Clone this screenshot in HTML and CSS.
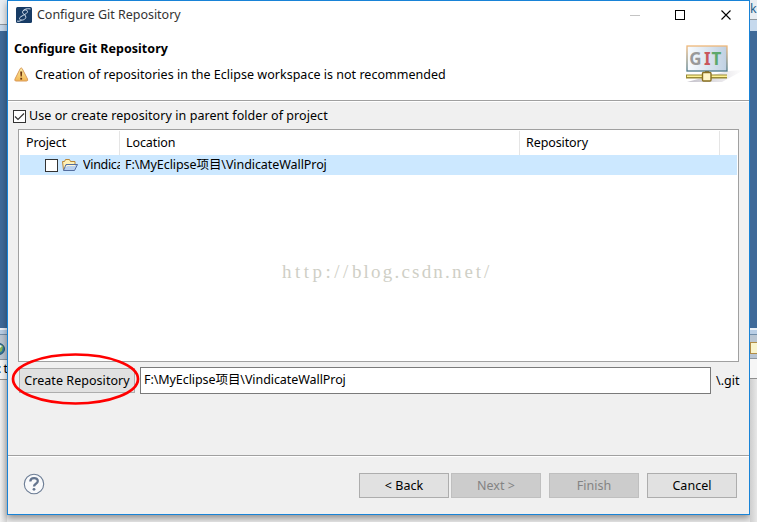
FILE: index.html
```html
<!DOCTYPE html>
<html lang="en">
<head>
<meta charset="utf-8">
<title>Configure Git Repository</title>
<link rel="stylesheet" href="styles.css">
</head>
<body>
<div class="desktop">
  <div class="strip strip-left">
    <div class="strip-top"></div><div class="strip-bar"></div><div class="strip-blue"></div>
    <div class="strip-edge"></div><div class="strip-tools"><svg class="globe" width="7" height="14" viewBox="0 0 7 14"><circle cx="-1" cy="7" r="5.5" fill="#347ca0" stroke="#285274"/><path d="M0 3l3 1-1 5-3 2z" fill="#8bb657"/><path d="M0 3l2 1-2 2z" fill="#e8f3f8"/></svg></div>
    <div class="strip-text"><span>: t</span></div><div class="strip-rest"></div>
  </div>
  <main class="dialog">
    <div class="titlebar">
      <svg class="app-icon" width="16" height="16" viewBox="0 0 16 16"><rect width="16" height="16" rx="1.5" fill="#173b65"/><path d="M14.5 2C10 1 6.5 3 6.5 5.2S10.500 8 9.800 10.500C9 13.500 3.500 14 3.500 11.500S11.500 7.500 11.500 4.500C11.500 2.500 8 2.500 7 4M1 14c1 .5 3 .3 4.500-.8" fill="none" stroke="#d3dfed" stroke-width="1"/></svg>
      <span class="title">Configure Git Repository</span>
      <svg class="controls" width="102" height="12" viewBox="0 0 102 12"><path d="M0 6.500h10" stroke="#c4c4c4"/><rect x="45.500" y="1.500" width="9" height="9" fill="none" stroke="#000"/><path d="M91.500 1.500l9 9m0-9l-9 9" stroke="#000" stroke-width="1.100"/></svg>
    </div>
    <header class="banner">
      <div class="banner-copy">
        <h1>Configure Git Repository</h1>
        <div class="warning"><svg width="16" height="16" viewBox="0 0 16 16"><defs><linearGradient id="amber" x2="0" y2="1"><stop stop-color="#fff0a5"/><stop offset="1" stop-color="#f2b552"/></linearGradient></defs><path d="M6.300 1.500Q7.200.3 8.100 1.500L13.500 12q.8 2-1 2H2Q.2 14 1 12z" fill="url(#amber)" stroke="#d99a5b"/><path d="M6.200 4.500h2l-.4 5H6.600z" fill="#6c3611"/><rect x="6.300" y="10.800" width="1.800" height="1.800" fill="#6c3611"/></svg><span>Creation of repositories in the Eclipse workspace is not recommended</span></div>
      </div>
      <svg class="git-art" width="60" height="42" viewBox="0 0 60 42"><defs><linearGradient id="screen"><stop stop-color="#f9fcff"/><stop offset="1" stop-color="#bfd0e2"/></linearGradient><linearGradient id="frame" x2="0" y2="1"><stop stop-color="#efb778"/><stop offset="1" stop-color="#4c7888"/></linearGradient><linearGradient id="shade"><stop stop-color="#c4c1ca"/><stop offset="1" stop-color="#fff"/></linearGradient></defs><path d="M1 37L42 26 58 25 36 37z" fill="url(#shade)"/><rect x="1" y="1" width="40" height="25" fill="url(#screen)" stroke="url(#frame)" stroke-width="1.300"/><text x="3.300" y="20" class="g">G</text><text x="18" y="20" class="i">I</text><text x="25.500" y="20" class="t">T</text><path d="M19 26h4v2h-4z" fill="#71714f"/><path d="M0 31.500h41" stroke="#998b35" stroke-width="4"/><path d="M1 31.300h40" stroke="#fff394" stroke-width="1.500"/><rect x="16.500" y="27.500" width="8.500" height="8.500" rx="1" fill="#fff6ca" stroke="#897021" stroke-width="1.400"/></svg>
    </header>
    <section class="content">
      <label class="option"><svg width="13" height="13" viewBox="0 0 13 13"><rect x=".5" y=".5" width="12" height="12" fill="#fff" stroke="#333"/><path d="M2 6.500l3 3 6-6" fill="none" stroke="#333" stroke-width="1.200"/></svg><span>Use or create repository in parent folder of project</span></label>
      <div class="repos">
        <div class="cols head"><span>Project</span><span>Location</span><span>Repository</span></div>
        <div class="cols row"><span class="tree-cell"><i class="box"></i><svg width="16" height="14" viewBox="0 0 16 14"><path d="M1.500 12L.5 3.500h2l1-2h4l1 2h4.500V6" fill="#fff1b5" stroke="#b98639"/><path d="M1.500 12.500L4 6.500h11.500l-3 6z" fill="#b9d0ef" stroke="#536d9d"/><path d="M4 9L5 7.500h8" fill="none" stroke="#fff6d2"/></svg><span class="clip">Vindica</span></span><span class="path">F:\MyEclipse项目\VindicateWallProj</span></div>
        <div class="watermark"><span class="scheme">http://</span><span class="host">blog.csdn.</span><span class="tld">net/</span></div>
      </div>
      <div class="create-row"><button class="create"><span>Create Repository</span></button><div class="field"><span class="path">F:\MyEclipse项目\VindicateWallProj</span></div><span class="suffix">\.git</span>
        <svg class="ring" width="130" height="54" viewBox="0 0 130 54"><ellipse cx="65.500" cy="27" rx="62.500" ry="24.500" fill="none" stroke="#f00" stroke-width="2.700"/></svg>
      </div>
    </section>
    <footer>
      <svg class="help" width="22" height="22" viewBox="0 0 22 22"><circle cx="11" cy="11" r="9.700" fill="#f8f9fb" stroke="#6b7c94" stroke-width="1.100"/><path d="M7.300 8.500C7.300 4 14.800 4 14.800 8c0 3-3.800 2.500-3.800 5.500" fill="none" stroke="#64758f" stroke-width="2.300"/><circle cx="11" cy="16.300" r="1.400" fill="#64758f"/></svg>
      <button><span>&lt; Back</span></button><button class="next" disabled><span>Next &gt;</span></button><button disabled><span>Finish</span></button><button><span>Cancel</span></button>
    </footer>
  </main>
  <div class="strip strip-right">
    <div class="strip-top"><span>k</span></div><div class="strip-bar"></div><div class="strip-blue"></div>
    <div class="strip-edge"></div><div class="strip-tools"><i class="tool"></i></div><div class="strip-text"></div><div class="strip-rest"></div>
  </div>
</div>
</body>
</html>
```
FILE: styles.css
```css
* { box-sizing: border-box; }
body { margin: 0; width: 757px; height: 522px; overflow: hidden; font: 12.5px/18px "Noto Sans", "Noto Sans CJK SC", sans-serif; color: #000; }
.desktop { display: grid; grid-template-columns: 7px 743px 7px; height: 522px; background: #ebebeb; overflow: hidden; }
svg { display: block; flex: none; }
.strip { display: grid; grid-template-rows: 20px 11px 297px 7px 24px 20px 143px; overflow: hidden; }
.strip-left { grid-template-rows: 25px 6px 297px 7px 25px 20px 142px; }
.strip-top { background: #e8edf2; border-bottom: 1px solid #8f979e; color: #29638d; overflow: hidden; }
.strip-bar { background: #c6d9ed; }
.strip-blue { background: #3f6a99; }
.strip-edge { background: #b9cee5; border-top: 2px solid #edf2f8; border-bottom: 1px solid #708da9; }
.strip-tools { background: #b9c5d2; padding-top: 7px; border-bottom: 1px solid #8c96a0; }
.tool { display: block; height: 12px; background: #f9f4cd; border: 1px solid #b18c45; border-right: 0; }
.strip-text { background: #f6f6f6; border-bottom: 1px solid #8f8f8f; overflow: hidden; white-space: nowrap; }
.strip-text span { margin-left: -2px; letter-spacing: -.5px; }
.strip-rest { background: linear-gradient(90deg, #f0f0f0, #d6d6d6); }
.strip-right .strip-rest { background: linear-gradient(90deg, #cecece, #e7e7e7); }
.dialog { height: 515px; border: 1px solid #1883d7; background: #f0f0f0; display: flex; flex-direction: column; box-shadow: 0 3px 7px #0006; }
.titlebar { height: 28px; flex: none; background: #fff; display: flex; align-items: center; padding-left: 8px; }
.title { margin-left: 5px; color: #333; width: 146px; white-space: nowrap; letter-spacing: -.03px; }
.controls { margin-left: auto; margin-right: 17px; }
.banner { height: 72px; flex: none; background: #fff; border-bottom: 1px solid #a0a0a0; display: flex; justify-content: space-between; padding: 11px 10px 0 6px; }
h1 { margin: 0; font-size: 12.5px; line-height: 18px; font-weight: 700; letter-spacing: .02px; white-space: nowrap; }
.warning { display: flex; align-items: center; margin-top: 8px; height: 18px; white-space: nowrap; letter-spacing: .02px; }
.warning span { margin-left: 5px; }
.warning svg { margin-top: -1px; }
.git-art { margin-top: 5px; margin-right: -7px; }
.git-art text { font: 700 17px "Noto Sans", sans-serif; }
.git-art .g { fill: #999; }
.git-art .i { fill: #c9575c; }
.git-art .t { fill: #5da86b; }
.content { border-top: 1px solid #fff; height: 354px; flex: none; padding: 5px 10px 0; }
.option { display: flex; align-items: center; height: 18px; margin-left: -5px; letter-spacing: .07px; }
.option span { margin-left: 3px; }
.repos { margin-top: 4px; height: 233px; border: 1px solid #a0a0a0; background: #fff; padding: 1px 1px 0; }
.cols { display: grid; grid-template-columns: 100px 400px 200px 1fr; }
.head { height: 24px; line-height: 23px; }
.head span { padding-left: 6px; border-right: 1px solid #e5e5e5; letter-spacing: -.1px; }
.row { height: 20px; background: #cce8ff; line-height: 20px; }
.tree-cell { display: flex; align-items: center; padding-left: 25px; overflow: hidden; }
.box { width: 13px; height: 13px; border: 1px solid #333; background: #fff; flex: none; margin-right: 4px; }
.clip { margin-left: 5px; width: 37px; overflow: hidden; white-space: nowrap; flex: none; letter-spacing: -.3px; }
.path { letter-spacing: -.07px; white-space: nowrap; }
.row .path { padding-left: 5px; }
.watermark { margin: 86px 0 0 262px; font: 19px/22px "Liberation Serif", serif; color: #cfcfc6; width: 212px; white-space: nowrap; }
.scheme { letter-spacing: 3.5px; }
.host { letter-spacing: 2.2px; }
.tld { letter-spacing: 2.9px; }
.create-row { position: relative; display: flex; align-items: center; margin-top: 5px; height: 27px; }
button { font: inherit; letter-spacing: .05px; color: #000; background: #e1e1e1; border: 1px solid #adadad; padding: 0; width: 90px; height: 25px; white-space: nowrap; }
.create { width: 116px; margin-left: 1px; flex: none; }
.field { width: 571px; height: 27px; margin-left: 5px; background: #fff; border: 1px solid #7a7a7a; padding: 2px 3px; flex: none; line-height: 19px; }
.suffix { margin-left: 5px; }
.ring { position: absolute; left: -8px; top: -15px; }
footer { border-top: 1px solid #a0a0a0; box-shadow: inset 0 1px #fff; height: 59px; flex: none; display: flex; padding: 17px 12px 0 15px; }
.help { margin-right: auto; }
footer button { margin-left: 8px; }
footer .next { margin-left: 2px; }
button:disabled { background: #ccc; border-color: #bfbfbf; color: #838383; }
```
